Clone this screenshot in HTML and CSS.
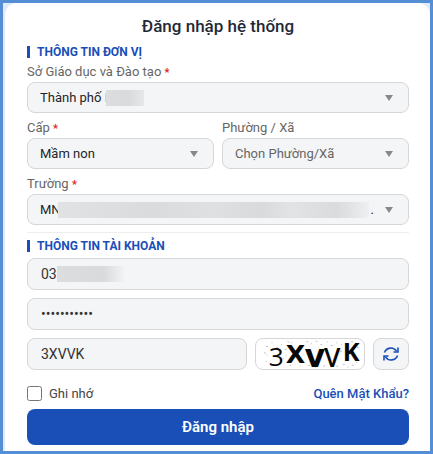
FILE: index.html
```html
<!DOCTYPE html>
<html lang="vi">
<head>
    <meta charset="UTF-8">
    <meta name="viewport" content="width=device-width, initial-scale=1.0">
    <title>Đăng nhập hệ thống</title>
    <link rel="stylesheet" href="styles.css">
</head>
<body>
    <main class="login-card">
        <h1>Đăng nhập hệ thống</h1>

        <form id="login-form">
            <section class="unit-section">
                <h2>THÔNG TIN ĐƠN VỊ</h2>
                <div class="form-group">
                    <label for="so">Sở Giáo dục và Đào tạo <span class="required">*</span></label>
                    <div class="select-box">
                        <select id="so" name="so">
                            <option>Thành phố I</option>
                        </select>
                        <span class="mask mask-city"></span>
                    </div>
                </div>
                <div class="form-row">
                    <div class="form-group">
                        <label for="cap">Cấp <span class="required">*</span></label>
                        <div class="select-box">
                            <select id="cap" name="cap">
                                <option>Mầm non</option>
                            </select>
                        </div>
                    </div>
                    <div class="form-group">
                        <label for="phuong">Phường / Xã</label>
                        <div class="select-box">
                            <select id="phuong" name="phuong" class="placeholder">
                                <option>Chọn Phường/Xã</option>
                            </select>
                        </div>
                    </div>
                </div>
                <div class="form-group">
                    <label for="truong">Trường <span class="required">*</span></label>
                    <div class="select-box">
                        <select id="truong" name="truong">
                            <option>MN</option>
                        </select>
                        <span class="mask mask-school"></span>
                        <span class="more">.</span>
                    </div>
                </div>
            </section>

            <section class="account-section">
                <h2>THÔNG TIN TÀI KHOẢN</h2>
                <div class="input-box">
                    <input type="text" name="taikhoan" value="03" aria-label="Tài khoản">
                    <span class="mask mask-user"></span>
                </div>
                <div class="input-box">
                    <input type="password" name="matkhau" value="12345678901" aria-label="Mật khẩu">
                </div>
                <div class="captcha-row">
                    <input type="text" name="captcha" value="3XVVK" aria-label="Mã xác nhận">
                    <svg class="captcha" viewBox="0 0 110 32" role="img" aria-label="Captcha">
                        <g class="noise">
                            <path d="M8 8h2M6 15h2M9 17h1M14 4h1M19 9h2M24 6h1M31 2l2 2M35 4h1M28 11h2M8 24h1M15 28h2M26 21h1M33 28h2M44 29h1M51 3h2M56 5h1M61 2l2 1M66 6h2M73 3h1M77 7h2M83 4h1M88 6h1M53 28h2M60 30h1M69 29h2M76 25h1M83 29h2M90 27h2M95 30h1M100 28h2M104 25h1M99 3h2M105 9h2M48 17h1M71 12h1M87 13h2M29 18h1"/>
                        </g>
                        <text class="thin" x="11" y="29">3</text>
                        <text class="thick" x="29" y="26">X</text>
                        <text class="wide" x="49" y="30">v</text>
                        <text class="lean" x="70" y="30">V</text>
                        <text class="bold" x="90" y="23">K</text>
                    </svg>
                    <button type="button" class="refresh" aria-label="Đổi mã">
                        <svg viewBox="0 0 16 16">
                            <path d="M1.5 6.5A6.7 6.7 0 0 1 13.5 5.2M14.5 9.5A6.7 6.7 0 0 1 2.5 10.8"/>
                            <path d="M15 1.5V6h-4.500M1 14.500V10h4.500"/>
                        </svg>
                    </button>
                </div>
            </section>

            <div class="options">
                <label class="remember"><input type="checkbox" name="nho">Ghi nhớ</label>
                <a href="#">Quên Mật Khẩu?</a>
            </div>
            <button type="submit" class="submit">Đăng nhập</button>
        </form>
    </main>
</body>
</html>
```
FILE: styles.css
```css
* {
    box-sizing: border-box;
}
body {
    margin: 0;
    min-height: 100vh;
    border: 3px solid #558ed5;
    padding: 0 0 0 2px;
    background-color: #dfeafa;
    font-family: Roboto, "Noto Sans", sans-serif;
    font-size: 13px;
    color: #212529;
}
.login-card {
    background-color: white;
    border-radius: 12px 12px 0 0;
    padding: 12px 21px 6px 22px;
}
h1 {
    margin: 0 0 8px;
    font-size: 17px;
    line-height: 22px;
    font-weight: 500;
    text-align: center;
    color: #1f2937;
}
h2 {
    display: flex;
    align-items: center;
    gap: 7px;
    margin: 0;
    font-size: 12px;
    line-height: 14px;
    font-weight: 700;
    color: #1a4fb8;
}
h2::before {
    content: "";
    width: 3px;
    height: 12px;
    background-color: #1a4fb8;
}
.unit-section {
    display: flex;
    flex-direction: column;
    gap: 7px;
    padding-bottom: 7px;
    border-bottom: 1px solid #eeeeee;
}
.unit-section h2 {
    margin-bottom: -2px;
}
.form-group {
    flex: 1;
    min-width: 0;
}
.form-group label {
    display: block;
    height: 18px;
    line-height: 16px;
    color: #666;
}
.required {
    font-size: 11px;
    font-weight: 700;
    color: #e02020;
}
.form-row {
    display: flex;
    gap: 8px;
}
.select-box,
.input-box {
    position: relative;
}
.select-box::after {
    content: "";
    position: absolute;
    right: 16px;
    top: 13px;
    border: 4px solid transparent;
    border-top: 6px solid #888;
    border-bottom: 0;
    pointer-events: none;
}
select,
input[type="text"],
input[type="password"] {
    display: block;
    width: 100%;
    min-width: 0;
    height: 32px;
    margin: 0;
    padding: 0 13px;
    border: 1px solid #d6d6d6;
    border-radius: 8px;
    background-color: #f4f5f7;
    font-family: inherit;
    font-size: 14px;
    color: #333;
}
select {
    appearance: none;
    height: 31px;
    padding: 0 12px;
    font-size: 13px;
    color: #212529;
}
select.placeholder {
    color: #666;
}
/* hidden private data */
.mask {
    position: absolute;
    top: 8px;
    height: 16px;
    background: linear-gradient(90deg, #dcdddf, #d9dadc 60%, #e6e7e9);
}
.mask-city {
    left: 79px;
    width: 38px;
}
.mask-school {
    left: 31px;
    right: 40px;
    background: linear-gradient(90deg, #e1e2e4, #dadbdd 30%, #dfe0e2 50%, #d9dadc 65%, #e2e3e5 75%, #dadbdd 90%, #eeeff1);
}
.mask-user {
    left: 30px;
    width: 67px;
    background: linear-gradient(90deg, #dcdddf, #d9dadc 70%, #f2f3f5);
}
.more {
    position: absolute;
    right: 35px;
    top: 8px;
    line-height: 16px;
}
.account-section {
    display: flex;
    flex-direction: column;
    gap: 8px;
    padding-top: 6px;
}
.account-section h2 {
    margin-bottom: -3px;
}
.captcha-row {
    display: flex;
    gap: 8px;
}
.captcha-row input {
    flex: 1;
}
.captcha {
    flex: none;
    width: 110px;
    height: 32px;
    border: 1px solid #d6d6d6;
    border-radius: 8px;
    background-color: white;
    font-family: "Open Sans", sans-serif;
    fill: #080808;
    overflow: visible;
}
.noise {
    stroke: #bbb;
    stroke-width: 1;
}
.thin {
    font-size: 28px;
}
.thick {
    font-family: "DejaVu Sans", sans-serif;
    font-size: 27px;
    font-weight: bold;
}
.wide {
    font-family: "DejaVu Sans", sans-serif;
    font-size: 34px;
    font-weight: bold;
}
.lean {
    font-size: 28px;
    font-weight: 600;
}
.bold {
    font-size: 27px;
    font-weight: bold;
}
.refresh {
    display: flex;
    flex: none;
    align-items: center;
    justify-content: center;
    width: 36px;
    height: 32px;
    padding: 0;
    border: 1px solid #d6d6d6;
    border-radius: 8px;
    background-color: #f4f5f7;
    cursor: pointer;
}
.refresh svg {
    width: 16px;
    height: 16px;
    fill: none;
    stroke: #1a4fb8;
    stroke-width: 1.6;
}
.options {
    display: flex;
    justify-content: space-between;
    align-items: center;
    padding: 15px 0 7px;
    line-height: 17px;
}
.remember {
    display: flex;
    align-items: center;
    gap: 7px;
    color: #444;
}
.remember input {
    width: 15px;
    height: 15px;
    margin: 0;
}
.options a {
    font-weight: 500;
    color: #1a4fb8;
    text-decoration: none;
}
.submit {
    display: block;
    width: 100%;
    height: 36px;
    border: none;
    border-radius: 8px;
    background-color: #1a4fb8;
    font-family: inherit;
    font-size: 15px;
    font-weight: 600;
    color: white;
    cursor: pointer;
}
```
